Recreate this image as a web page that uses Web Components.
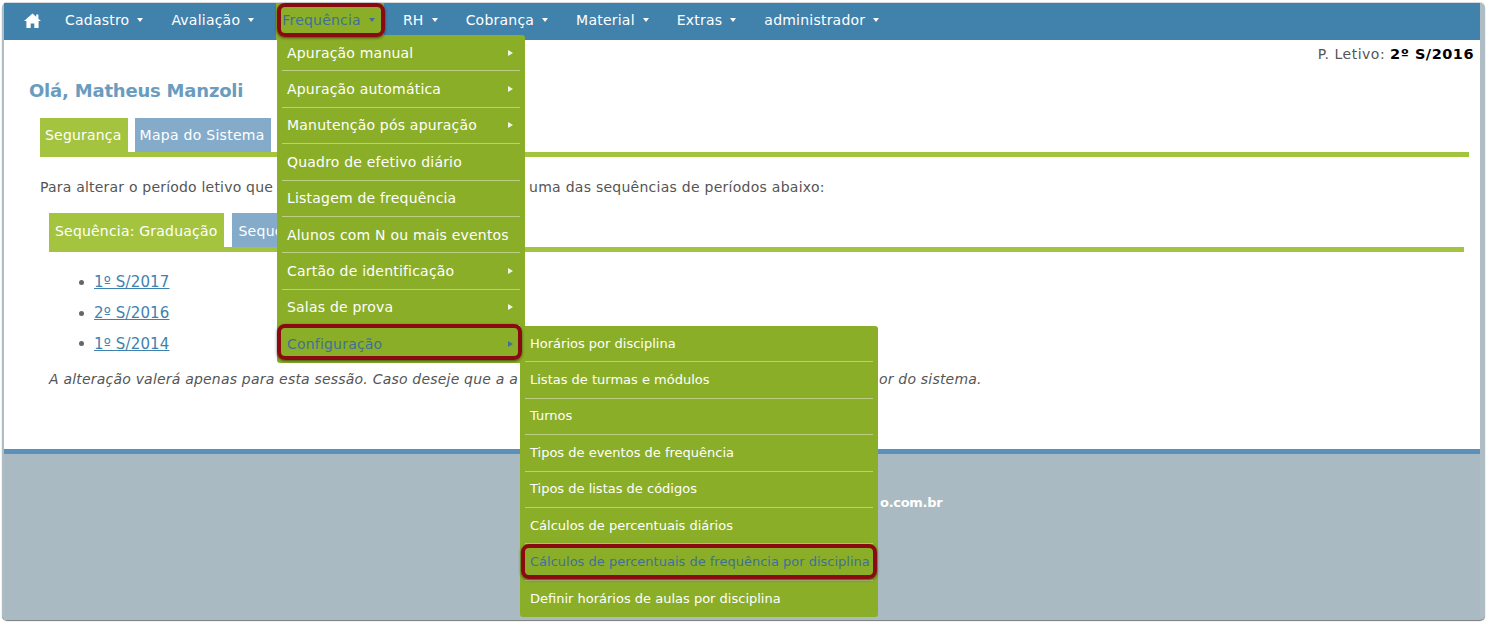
<!DOCTYPE html>
<html lang="pt"><head><meta charset="utf-8"><title>Frequência</title>
<style>
html,body{margin:0;padding:0;background:#fff;height:623px;overflow:hidden}
body{font-family:"DejaVu Sans",Verdana,sans-serif}
</style></head><body>
<app-window>
  <main-nav slot="nav"></main-nav>
  <home-content></home-content>
  <page-footer slot="footer"></page-footer>
  <fly-menu slot="overlay" data-x="277" data-y="35" data-w="248" data-fs="14" data-ls=".2" data-items="Apuração manual>|Apuração automática>|Manutenção pós apuração>|Quadro de efetivo diário|Listagem de frequência|Alunos com N ou mais eventos|Cartão de identificação>|Salas de prova>|Configuração>!"></fly-menu>
  <fly-menu slot="overlay" data-x="520" data-y="326" data-w="358" data-fs="13" data-ls="0" data-items="Horários por disciplina|Listas de turmas e módulos|Turnos|Tipos de eventos de frequência|Tipos de listas de códigos|Cálculos de percentuais diários|Cálculos de percentuais de frequência por disciplina!|Definir horários de aulas por disciplina"></fly-menu>
  <call-out slot="overlay" data-x="277" data-y="3" data-w="108" data-h="34"></call-out>
  <call-out slot="overlay" data-x="277" data-y="324" data-w="245" data-h="36"></call-out>
  <call-out slot="overlay" data-x="521" data-y="544" data-w="356" data-h="35"></call-out>
</app-window>
<script>
const def=(n,html)=>customElements.define(n,class extends HTMLElement{connectedCallback(){if(this.shadowRoot)return;const s=this.attachShadow({mode:'open'});s.innerHTML=typeof html==='function'?html(this):html;}});
def('app-window',`<style>
:host{display:block;position:relative;box-sizing:border-box;width:1483px;height:617px;margin:3px 0 0 2px;padding:0 5px 0 2px;box-shadow:0 -1px 0 #d5dadc,0 1px 1px #777;border-radius:5px;background:#aebcc3}
.f{display:flex;flex-direction:column;height:100%;overflow:hidden;background:#fff}
</style><div class="f"><slot name="nav"></slot><slot></slot><slot name="footer"></slot></div><slot name="overlay"></slot>`);
def('main-nav',()=>{const items=['Cadastro','Avaliação','Frequência','RH','Cobrança','Material','Extras','administrador'];
return `<style>
:host{display:flex;height:37px;background:#4182ad;color:#fff;font:14px/17px "DejaVu Sans",Verdana,sans-serif;letter-spacing:.22px;flex:none;padding-left:20px;box-sizing:border-box}
svg{display:block;margin:10px 0 0}
.home{width:41px;flex:none}
a{display:flex;gap:8px;align-items:center;height:37px;padding:0 28px 3px 0;box-sizing:border-box;flex:none}
.i{display:block;width:0;height:0;border:3px solid transparent;border-top:4px solid #fff;border-bottom:0}
.on{background:#8bae29;color:#3f7196;margin:0 19px 0 -6px;padding:0 9px 3px 6px}
.on .i{border-top-color:#3f7196}
</style><div class="home"><svg width="17" height="15" viewBox="0 0 17 15"><path fill="#fff" d="M8.5 .5 0 8h2.4v7h4.3v-4.6h3.6V15h4.3V8H17l-2.6-2.3V1.4h-2.2v2.4z"/></svg></div>`+items.map(t=>`<a class="${t==='Frequência'?'on':''}">${t}<span class="i"></span></a>`).join('')});
def('home-content',`<style>
:host{display:block;flex:1;position:relative;color:#555;font:14px/1.2 "DejaVu Sans",Verdana,sans-serif;letter-spacing:.2px;min-height:0}
.per{text-align:right;padding:6px 6px 0 0;height:17px;line-height:17px;letter-spacing:.5px}
.per b{color:#000;font-size:14.5px}
h1{margin:16px 0 0;padding:0 0 0 25px;font:bold 18px/24px "DejaVu Sans",Verdana,sans-serif;letter-spacing:-.2px;color:#6a9cc0}
.tabs{display:flex;gap:7px;margin:15px 11px 0 36px;height:34px;border-bottom:5px solid #a4c43f;align-items:flex-end}
.tabs span{display:block;height:34px;line-height:34px;padding:0 6px 0 5px;color:#fff;background:#85abcb;letter-spacing:.28px}
.tabs span.a{background:#a4c43f;padding:0 6px 0 5px;letter-spacing:.2px}
p{margin:22px 0 0 36px;line-height:17px;white-space:nowrap}
.tabs.s{margin:17px 16px 0 45px;gap:8px}
.tabs.s span{padding:0 6px;line-height:36px;white-space:nowrap}
.tabs.s span.a{padding:0 7px 0 6px}
ul{margin:15px 0 0;padding:0 0 0 75px;list-style:none}
li{display:flex;align-items:center;gap:10px;height:30.7px;font-size:15px;letter-spacing:.15px}
li::before{content:"";display:block;width:5px;height:5px;border-radius:50%;background:#666}
li a{color:#3f82ae;text-decoration:underline}
em{display:block;margin:12px 0 0 45px;line-height:17px;font-style:italic;white-space:nowrap}
.gap{display:inline-block}
</style>
<div class="per">P. Letivo: <b>2º S/2016</b></div>
<h1>Olá, Matheus Manzoli</h1>
<div class="tabs"><span class="a">Segurança</span><span>Mapa do Sistema</span></div>
<p>Para alterar o período letivo que<span class="gap" style="width:256px"></span><span style="letter-spacing:.26px">uma das sequências de períodos abaixo:</span></p>
<div class="tabs s"><span class="a">Sequência: Graduação</span><span>Sequência</span></div>
<ul><li><a>1º S/2017</a></li><li><a>2º S/2016</a></li><li><a>1º S/2014</a></li></ul>
<em>A alteração valerá apenas para esta sessão. Caso deseje que a a<span class="gap" style="width:361px"></span>or do sistema.</em>`);
def('page-footer',`<style>
:host{display:block;flex:none;height:171px;box-sizing:border-box;background:#a9bac2;border-top:5px solid #5b91b9;color:#fff;font:bold 13px/16px "DejaVu Sans",Verdana,sans-serif;letter-spacing:-.3px;padding:41px 0 0 876px}
</style>o.com.br`);
def('fly-menu',el=>{const d=el.dataset;const its=d.items.split('|');
return `<style>
:host{position:absolute;left:${d.x-2}px;top:${d.y-3}px;width:${d.w}px;box-sizing:border-box;background:#8bae29;color:#fff;border-radius:3px;padding:0 5px;font:${d.fs}px/18px "DejaVu Sans",Verdana,sans-serif;letter-spacing:${d.ls}px}
div{display:flex;justify-content:space-between;align-items:center;height:36.4px;box-sizing:border-box;border-bottom:1px solid #bccf80;padding:0 7px 0 5px;white-space:nowrap}
div:last-child{border-bottom:0}
.on{color:#3f7196}
i{display:block;width:0;height:0;border:3px solid transparent;border-left:5px solid #f2f5e6;border-right:0}
.on i{border-left-color:#3f7196}
</style>`+its.map(t=>{const on=t.endsWith('!');t=t.replace('!','');const sub=t.endsWith('>');t=t.replace('>','');return `<div class="${on?'on':''}"><span>${t}</span>${sub?'<i></i>':''}</div>`}).join('')});
def('call-out',el=>{const d=el.dataset;return `<style>
:host{position:absolute;left:${d.x-2}px;top:${d.y-3}px;width:${d.w}px;height:${d.h}px;box-sizing:border-box;border:4px solid #8a0a12;border-radius:8px;box-shadow:0 1px 3px rgba(0,0,0,.55)}
</style>`});
</script>
</body></html>
